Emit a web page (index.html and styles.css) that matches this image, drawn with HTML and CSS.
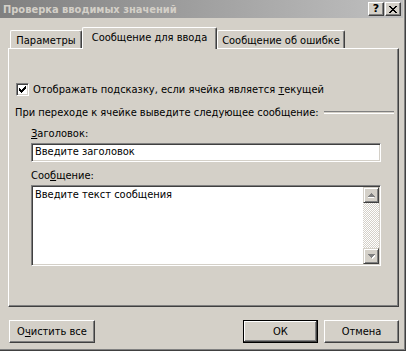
FILE: index.html
```html
<!DOCTYPE html>
<html lang="ru">
<head>
  <meta charset="UTF-8" />
  <title>Проверка вводимых значений</title>
  <link rel="stylesheet" href="styles.css">
</head>
<body>

  <div class="window">
    <div class="titlebar">
      <span class="title">Проверка вводимых значений</span>
      <div class="caption-btns">
        <span class="cap-btn help">?</span>
        <span class="cap-btn close">
          <svg width="8" height="7" viewBox="0 0 8 7" shape-rendering="crispEdges">
            <path d="M0 0h2v1h-2z M6 0h2v1h-2z M1 1h2v1h-2z M5 1h2v1h-2z M2 2h4v1h-4z M3 3h2v1h-2z M2 4h4v1h-4z M1 5h2v1h-2z M5 5h2v1h-2z M0 6h2v1h-2z M6 6h2v1h-2z" fill="#000"/>
          </svg>
        </span>
      </div>
    </div>

    <div class="tabs">
      <div class="tab tab-params">Параметры</div>
      <div class="tab tab-active">Сообщение для ввода</div>
      <div class="tab tab-error">Сообщение об ошибке</div>
    </div>

    <div class="panel">
      <div class="check-row">
        <span class="checkbox">
          <svg width="7" height="7" viewBox="0 0 7 7" shape-rendering="crispEdges">
            <path d="M0 2h1v3h-1z M1 3h1v3h-1z M2 4h1v3h-1z M3 3h1v3h-1z M4 2h1v3h-1z M5 1h1v3h-1z M6 0h1v3h-1z" fill="#000"/>
          </svg>
        </span>
        <span>Отображать подсказку, если ячейка является <u>т</u>екущей</span>
      </div>

      <div class="group-row">
        <span>При переходе к ячейке выведите следующее сообщение:</span>
        <span class="etched"></span>
      </div>

      <div class="field-label"><u>З</u>аголовок:</div>
      <div class="edit">Введите заголовок</div>

      <div class="field-label label-msg">Соо<u>б</u>щение:</div>
      <div class="memo">
        <div class="memo-text">Введите текст сообщения</div>
        <div class="scrollbar">
          <span class="scroll-btn">
            <svg width="7" height="5" viewBox="0 0 7 5" shape-rendering="crispEdges">
              <path d="M4 1h1v1h1v1h1v1h-1v1h-6v-1z" fill="#fff"/>
              <path d="M3 0h1v1h1v1h1v1h1v1h-7v-1h1v-1h1v-1h1z" fill="#808080"/>
            </svg>
          </span>
          <span class="scroll-track"></span>
          <span class="scroll-btn">
            <svg width="7" height="5" viewBox="0 0 7 5" shape-rendering="crispEdges">
              <path d="M1 1h7v1h-1v1h-1v1h-1v1h-1v-1z" fill="#fff"/>
              <path d="M0 0h7v1h-1v1h-1v1h-1v1h-1v-1h-1v-1h-1v-1h-1z" fill="#808080"/>
            </svg>
          </span>
        </div>
      </div>
    </div>

    <div class="buttons">
      <span class="btn btn-clear">О<u>ч</u>истить все</span>
      <span class="btn btn-default">ОК</span>
      <span class="btn btn-cancel">Отмена</span>
    </div>
  </div>

</body>
</html>
```

FILE: styles.css
```css
body {
  margin: 0;
  background: #d4d0c8;
  font-family: 'DejaVu Sans Condensed', 'DejaVu Sans', sans-serif;
  font-size: 11px;
  color: #000;
}

.window {
  width: 406px;
  height: 351px;
  box-sizing: border-box;
  background: #d4d0c8;
  border-right: 1px solid #404040;
  border-bottom: 1px solid #404040;
  box-shadow: inset -1px -1px #808080;
}

/* title bar */
.titlebar {
  height: 18px;
  margin-right: 2px;
  display: flex;
  align-items: center;
  background: linear-gradient(to right, #808080, #c0c0c0);
}

.title {
  padding-left: 3px;
  font-weight: 700;
  color: #d4d0c8;
  white-space: nowrap;
}

.caption-btns {
  margin-left: auto;
  margin-right: 2px;
  display: flex;
  gap: 1px;
}

.cap-btn {
  width: 16px;
  height: 14px;
  box-sizing: border-box;
  display: flex;
  align-items: center;
  justify-content: center;
  background: #d4d0c8;
  border: 1px solid;
  border-color: #fff #404040 #404040 #fff;
  box-shadow: inset -1px -1px #808080;
}

.help {
  font-family: 'DejaVu Sans', sans-serif;
  font-weight: 700;
  font-size: 11px;
  line-height: 12px;
}

/* tabs */
.tabs {
  margin-top: 9px;
  margin-left: 8px;
  height: 21px;
  display: flex;
  align-items: flex-end;
}

.tab {
  height: 18px;
  box-sizing: border-box;
  display: flex;
  align-items: center;
  justify-content: center;
  background: #d4d0c8;
  border-top: 1px solid #fff;
  border-left: 1px solid #fff;
  border-right: 1px solid #404040;
  border-radius: 2px 2px 0 0;
  box-shadow: inset -1px 0 #808080;
  white-space: nowrap;
}

.tab-params {
  margin-left: 2px;
  width: 72px;
  padding-top: 2px;
}

.tab-active {
  width: 135px;
  height: 22px;
  margin-bottom: -1px;
  position: relative;
  z-index: 1;
  padding-bottom: 2px;
}

.tab-error {
  width: 128px;
  padding-top: 2px;
}

/* tab panel */
.panel {
  margin-left: 8px;
  width: 391px;
  height: 259px;
  box-sizing: border-box;
  padding: 0 4px 0 0;
  border-top: 1px solid #fff;
  border-left: 1px solid #fff;
  border-right: 1px solid #404040;
  border-bottom: 1px solid #404040;
  box-shadow: inset -1px -1px #808080;
  display: flex;
  flex-direction: column;
}

.check-row {
  margin-top: 34px;
  margin-left: 7px;
  height: 13px;
  display: flex;
  align-items: center;
  gap: 4px;
  white-space: nowrap;
}

.checkbox {
  width: 13px;
  height: 13px;
  box-sizing: border-box;
  display: flex;
  align-items: center;
  justify-content: center;
  background: #fff;
  border: 1px solid;
  border-color: #808080 #fff #fff #808080;
  box-shadow: inset 1px 1px #404040, inset -1px -1px #d4d0c8;
}

.group-row {
  margin-top: 10px;
  margin-left: 6px;
  height: 13px;
  display: flex;
  align-items: center;
  white-space: nowrap;
}

.etched {
  flex: 1;
  margin-left: 5px;
  height: 1px;
  border-top: 1px solid #808080;
  border-bottom: 1px solid #fff;
}

.field-label {
  margin-top: 8px;
  margin-left: 22px;
  height: 13px;
  line-height: 13px;
}

.label-msg {
  margin-top: 7px;
}

.edit {
  margin-top: 3px;
  margin-left: 22px;
  width: 350px;
  height: 19px;
  box-sizing: border-box;
  padding-left: 3px;
  line-height: 15px;
  background: #fff;
  border: 1px solid;
  border-color: #808080 #fff #fff #808080;
  box-shadow: inset 1px 1px #404040, inset -1px -1px #d4d0c8;
}

.memo {
  margin-top: 3px;
  margin-left: 22px;
  width: 350px;
  height: 81px;
  box-sizing: border-box;
  padding: 2px;
  display: flex;
  background: #fff;
  border: 1px solid;
  border-color: #808080 #fff #fff #808080;
  box-shadow: inset 1px 1px #404040, inset -1px -1px #d4d0c8;
  padding: 1px;
}

.memo-text {
  flex: 1;
  padding: 1px 0 0 2px;
  line-height: 13px;
}

.scrollbar {
  width: 16px;
  display: flex;
  flex-direction: column;
}

.scroll-btn {
  width: 16px;
  height: 16px;
  box-sizing: border-box;
  display: flex;
  align-items: center;
  justify-content: center;
  background: #d4d0c8;
  border: 1px solid;
  border-color: #d4d0c8 #404040 #404040 #d4d0c8;
  box-shadow: inset 1px 1px #fff, inset -1px -1px #808080;
}

.scroll-track {
  flex: 1;
  background: repeating-conic-gradient(#d4d0c8 0 25%, #fff 0 50%) 0 0 / 2px 2px;
}

/* bottom buttons */
.buttons {
  margin-top: 13px;
  display: flex;
  padding-right: 6px;
}

.btn {
  height: 23px;
  box-sizing: border-box;
  display: flex;
  align-items: center;
  justify-content: center;
  background: #d4d0c8;
  border: 1px solid;
  border-color: #fff #404040 #404040 #fff;
  box-shadow: inset -1px -1px #808080;
  white-space: nowrap;
}

.btn-clear {
  margin-left: 9px;
  width: 86px;
}

.btn-default {
  margin-left: auto;
  width: 75px;
  border-color: #000;
  box-shadow: inset -1px -1px #404040, inset 1px 1px #fff, inset -2px -2px #808080;
}

.btn-cancel {
  margin-left: 6px;
  width: 75px;
}
```
